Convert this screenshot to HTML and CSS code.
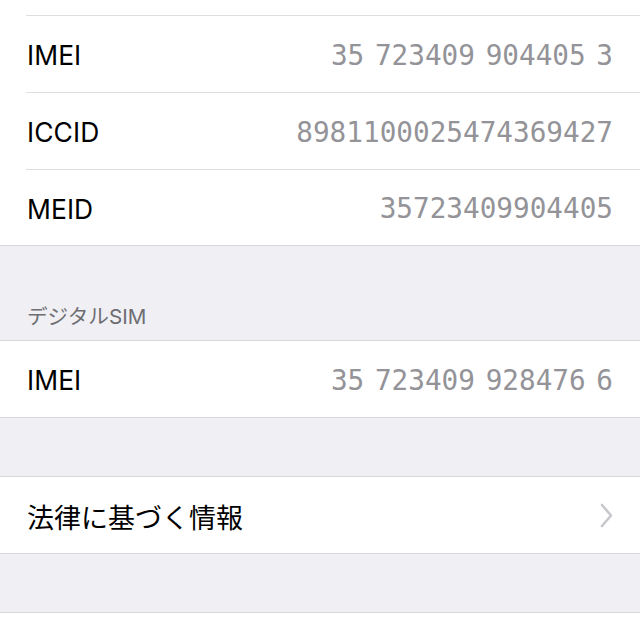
FILE: index.html
```html
<!DOCTYPE html>
<html lang="ja">
<head>
    <meta charset="UTF-8">
    <meta name="viewport" content="width=device-width, initial-scale=1.0">
    <title>情報</title>
    <link rel="stylesheet" href="styles.css">
</head>
<body>

    <div class="screen">
        <!-- SIM -->
        <div class="group no-top">
            <div class="row stub"></div>
            <div class="row">
                <span class="label">IMEI</span>
                <span class="value">35 723409 904405 3</span>
            </div>
            <div class="row">
                <span class="label">ICCID</span>
                <span class="value">8981100025474369427</span>
            </div>
            <div class="row last short">
                <span class="label">MEID</span>
                <span class="value">35723409904405</span>
            </div>
        </div>

        <div class="section-header">デジタルSIM</div>

        <div class="group">
            <div class="row last">
                <span class="label">IMEI</span>
                <span class="value">35 723409 928476 6</span>
            </div>
        </div>

        <div class="spacer"></div>

        <div class="group">
            <div class="row last">
                <span class="label label-jp">法律に基づく情報</span>
                <svg class="chevron" width="13" height="25" viewBox="0 0 13 25">
                    <path d="M2 2 L11 12.5 L2 23" fill="none" stroke="#c7c7cc" stroke-width="2.6" stroke-linecap="round" stroke-linejoin="round"/>
                </svg>
            </div>
        </div>

        <div class="spacer"></div>

        <div class="group no-bottom">
            <div class="row stub last"></div>
        </div>
    </div>

</body>
</html>
```

FILE: styles.css
```css
/* General */
body {
    margin: 0;
    padding: 0;
    background: #efeff4;
    font-family: 'Inter', 'Noto Sans CJK JP', sans-serif;
    color: #000;
}

.screen {
    width: 640px;
    height: 640px;
    overflow: hidden;
}

/* Groups */
.group {
    background: #fff;
    border-top: 1px solid #d8d8dc;
    border-bottom: 1px solid #d8d8dc;
}

.group.no-top {
    border-top: none;
}

.group.no-bottom {
    border-bottom: none;
}

/* Rows */
.row {
    display: flex;
    align-items: center;
    justify-content: space-between;
    height: 77px;
    margin-left: 26px;
    padding: 2px 27px 0 1px;
    box-sizing: border-box;
    border-bottom: 1px solid #dedee2;
}

.row.last {
    height: 76px;
    border-bottom: none;
}

.row.short {
    height: 75px;
}

.row.stub {
    height: 16px;
}

.group.no-bottom .row.stub {
    height: 40px;
}

.label {
    font-size: 26.4px;
    letter-spacing: 0.1px;
}

.label-jp {
    font-size: 27px;
    letter-spacing: 0;
}

.value {
    font-family: 'DejaVu Sans Mono', monospace;
    font-size: 27.7px;
    color: #939398;
    word-spacing: -6px;
}

.chevron {
    display: block;
    margin-top: -2px;
}

/* Section header */
.section-header {
    height: 94px;
    display: flex;
    align-items: flex-end;
    padding: 0 27px 11px;
    box-sizing: border-box;
    font-size: 20.6px;
    line-height: 24px;
    color: #6d6d72;
}

.spacer {
    height: 58px;
}
```
